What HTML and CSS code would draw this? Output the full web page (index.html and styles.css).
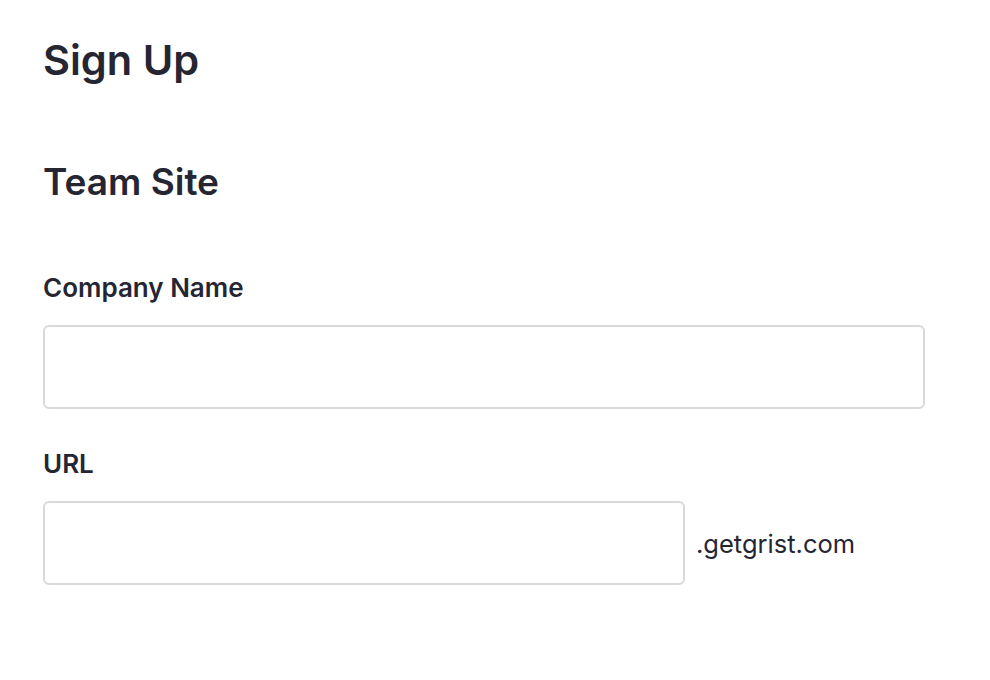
FILE: index.html
```html
<!DOCTYPE html>
<html>
<head>
<meta charset="utf-8">
<link rel="stylesheet" href="styles.css">
</head>
<body>
<div class="page">
  <h1 class="title">Sign Up</h1>
  <h2 class="subtitle">Team Site</h2>
  <div class="field">
    <label class="label">Company Name</label>
    <input class="input input-wide" type="text">
  </div>
  <div class="field">
    <label class="label">URL</label>
    <div class="url-row">
      <input class="input input-url" type="text">
      <span class="suffix">.getgrist.com</span>
    </div>
  </div>
</div>
</body>
</html>
```

FILE: styles.css
```css
html, body {
  margin: 0;
  padding: 0;
  background: #ffffff;
}
body {
  font-family: Inter, "Noto Sans", sans-serif;
  color: #262633;
}
.page {
  padding: 32px 0 0 43px;
  width: 882px;
}
.title {
  margin: 0;
  font-size: 41.5px;
  font-weight: 600;
  line-height: 56px;
}
.subtitle {
  margin: 68px 0 0 0;
  font-size: 37px;
  font-weight: 600;
  line-height: 52px;
}
.field {
  display: flex;
  flex-direction: column;
}
.label {
  margin-top: 64px;
  font-size: 26px;
  font-weight: 600;
  line-height: 32px;
  margin-bottom: 21px;
}
.field + .field .label {
  margin-top: 39px;
  margin-bottom: 21px;
}
.input {
  box-sizing: border-box;
  height: 84px;
  border: 2px solid #d9d9d9;
  border-radius: 6px;
  background: #fff;
  outline: none;
  padding: 0 16px;
  font-family: inherit;
  font-size: 26px;
}
.input-wide {
  width: 882px;
}
.url-row {
  display: flex;
  align-items: center;
}
.input-url {
  width: 642px;
}
.suffix {
  margin-left: 11px;
  font-size: 25.5px;
  font-weight: 400;
  color: #262633;
}
```
